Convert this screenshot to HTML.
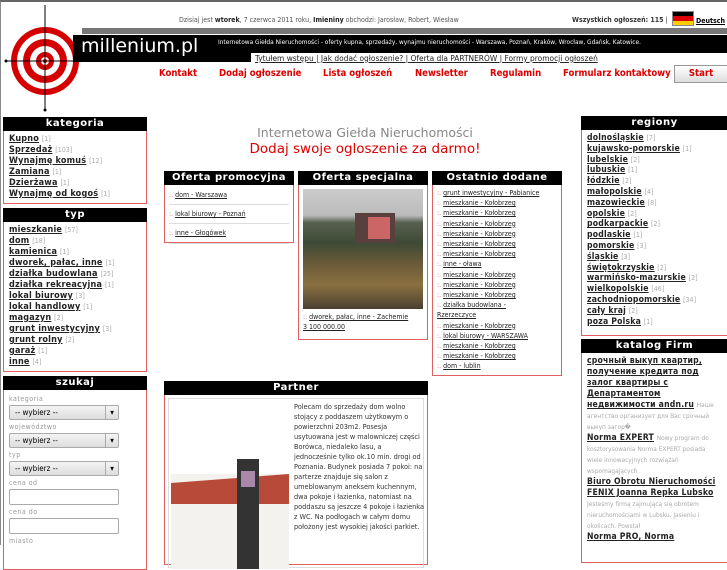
<!DOCTYPE html>
<html><head><meta charset="utf-8"><style>
*{margin:0;padding:0;box-sizing:border-box}
body{width:727px;height:545px;overflow:hidden;background:#fff;font-family:"DejaVu Sans Condensed","DejaVu Sans","Liberation Sans",sans-serif;position:relative;border-top:2px solid #666;border-left:1px solid #888}
.a{position:absolute}
.hd{background:#000;color:#fff;font-weight:bold;font-size:10px;text-align:center;height:14px;line-height:14px;letter-spacing:.5px;font-family:"DejaVu Sans",sans-serif}
.bx{border:1px solid #e06060;border-top:none;background:#fff}
.lst{font-size:9px;line-height:11px;padding:3px 5px;font-weight:bold}
.lst a{color:#222;text-decoration:underline;letter-spacing:.2px}
.lst span{color:#aaa;font-weight:normal;font-size:7px}
.sm{font-size:7px;line-height:10.2px;padding:3px 4px;white-space:nowrap}
.sm a{color:#222;text-decoration:underline}
.sm b{color:#e66;font-weight:normal}
.nav a{color:#d00;font-weight:bold;font-size:9.5px;text-decoration:none;position:absolute;top:0}
.sel{width:110px;height:15px;border:1px solid #aaa;border-radius:2px;background:linear-gradient(#f4f4f4,#ddd);font-size:8px;line-height:13px;padding-left:5px;position:relative}
.sel:after{content:"▾";position:absolute;right:0;top:0;width:12px;border-left:1px solid #aaa;text-align:center;font-size:8px}
.inp{width:110px;height:16px;border:1px solid #aaa;border-radius:2px;background:#fff}
.lb{font-size:7px;color:#999;letter-spacing:.5px;margin:3px 0 2px}
</style></head><body>
<svg class="a" style="left:0;top:0" width="90" height="115">
<circle cx="44" cy="59" r="34" fill="#d40000"/>
<circle cx="44" cy="59" r="28" fill="#fff"/>
<circle cx="44" cy="59" r="22" fill="#d40000"/>
<circle cx="44" cy="59" r="15" fill="#fff"/>
<circle cx="44" cy="59" r="9" fill="#d40000"/>
<circle cx="44" cy="59" r="4" fill="#fff"/>
<circle cx="44" cy="59" r="2" fill="#d40000"/>
<line x1="5" y1="59" x2="72" y2="59" stroke="#000"/>
<line x1="44" y1="3" x2="44" y2="108" stroke="#000"/>
<circle cx="5" cy="59" r="1.5"/><circle cx="44" cy="108" r="1.5"/>
</svg>
<div class="a" style="left:81px;top:26px;width:646px;height:6px;background:#777"></div>
<div class="a" style="left:72px;top:33px;width:655px;height:27px;background:#000"></div>
<div class="a" style="left:250px;top:51px;width:477px;height:10px;background:#fff"></div>
<div class="a" style="left:80px;top:33px;color:#fff;font-size:19px;font-family:'DejaVu Sans',sans-serif">millenium.pl</div>
<div class="a" style="left:178px;top:14px;font-size:7px;color:#555;white-space:nowrap">Dzisiaj jest <b style="color:#222">wtorek</b>, 7 czerwca 2011 roku, <b style="color:#222">Imieniny</b> obchodzi: Jarosław, Robert, Wiesław</div>
<div class="a" style="left:571px;top:14px;font-size:7px;color:#333;white-space:nowrap"><b>Wszystkich ogłoszeń: 115</b> |</div>
<div class="a" style="left:671px;top:9px;width:22px;height:15px;border:1px solid #888"><div style="height:33%;background:#000"></div><div style="height:34%;background:#d00"></div><div style="height:33%;background:#fc0"></div></div>
<div class="a" style="left:695px;top:15px;font-size:7px;font-weight:bold;text-decoration:underline">Deutsch</div>
<div class="a" style="left:217px;top:36px;font-size:6.5px;color:#fff;white-space:nowrap">Internetowa Giełda Nieruchomości - oferty kupna, sprzedaży, wynajmu nieruchomości - Warszawa, Poznań, Kraków, Wrocław, Gdańsk, Katowice.</div>
<div class="a" style="left:254px;top:51px;font-size:8.3px;color:#222;white-space:nowrap;text-decoration:underline">Tytułem wstępu | Jak dodać ogłoszenie? | Oferta dla PARTNERÓW | Formy promocji ogłoszeń</div>
<div class="a nav" style="left:0;top:66px;width:727px">
<a style="left:158px">Kontakt</a><a style="left:218px">Dodaj ogłoszenie</a><a style="left:322px">Lista ogłoszeń</a><a style="left:414px">Newsletter</a><a style="left:489px">Regulamin</a><a style="left:562px">Formularz kontaktowy</a></div>
<div class="a" style="left:673px;top:63px;width:54px;height:18px;border:1px solid #999;background:linear-gradient(#fff,#ddd);color:#d00;font-weight:bold;font-size:9.5px;text-align:center;line-height:16px">Start</div>

<div class="a" style="left:2px;top:115px;width:144px"><div class="hd">kategoria</div><div class="bx lst" style="height:73px">
<a>Kupno</a> <span>[1]</span><br><a>Sprzedaż</a> <span>[103]</span><br><a>Wynajmę komuś</a> <span>[12]</span><br><a>Zamiana</a> <span>[1]</span><br><a>Dzierżawa</a> <span>[1]</span><br><a>Wynajmę od kogoś</a> <span>[1]</span></div></div>
<div class="a" style="left:2px;top:206px;width:144px"><div class="hd">typ</div><div class="bx lst" style="height:150px">
<a>mieszkanie</a> <span>[57]</span><br><a>dom</a> <span>[18]</span><br><a>kamienica</a> <span>[1]</span><br><a>dworek, pałac, inne</a> <span>[1]</span><br><a>działka budowlana</a> <span>[25]</span><br><a>działka rekreacyjna</a> <span>[1]</span><br><a>lokal biurowy</a> <span>[3]</span><br><a>lokal handlowy</a> <span>[1]</span><br><a>magazyn</a> <span>[2]</span><br><a>grunt inwestycyjny</a> <span>[3]</span><br><a>grunt rolny</a> <span>[2]</span><br><a>garaż</a> <span>[1]</span><br><a>inne</a> <span>[4]</span></div></div>
<div class="a" style="left:2px;top:374px;width:144px"><div class="hd">szukaj</div><div class="bx" style="height:180px;padding:2px 5px">
<div class="lb">kategoria</div><div class="sel">-- wybierz --</div>
<div class="lb">województwo</div><div class="sel">-- wybierz --</div>
<div class="lb">typ</div><div class="sel">-- wybierz --</div>
<div class="lb">cena od</div><div class="inp"></div>
<div class="lb">cena do</div><div class="inp"></div>
<div class="lb">miasto</div></div></div>

<div class="a" style="left:150px;top:123px;width:428px;text-align:center;color:#888;font-size:12.5px;font-family:'DejaVu Sans',sans-serif">Internetowa Giełda Nieruchomości</div>
<div class="a" style="left:150px;top:139px;width:428px;text-align:center;color:#d00;font-size:13.5px;font-family:'DejaVu Sans',sans-serif">Dodaj swoje ogloszenie za darmo!</div>

<div class="a" style="left:163px;top:169px;width:130px"><div class="hd">Oferta promocyjna</div><div class="bx sm" style="height:58px">
<div style="border-bottom:1px solid #ddd;padding:2px 0 4px"><b>:.</b> <a>dom - Warszawa</a></div>
<div style="border-bottom:1px solid #ddd;padding:4px 0"><b>:.</b> <a>lokal biurowy - Poznań</a></div>
<div style="border-bottom:1px solid #ddd;padding:4px 0"><b>:.</b> <a>inne - Głogówek</a></div></div></div>
<div class="a" style="left:297px;top:169px;width:130px"><div class="hd">Oferta specjalna</div><div class="bx sm" style="height:155px">
<div style="height:120px;margin:1px 0 3px;background:linear-gradient(#ccc 0,#bbb 22%,#576050 28%,#3e4a35 45%,#6a5a3a 62%,#8a7040 80%,#4a4030 100%);position:relative"><div style="position:absolute;left:52px;top:24px;width:40px;height:30px;background:#5a3f3f"></div><div style="position:absolute;left:65px;top:28px;width:22px;height:22px;background:#c66"></div></div>
<b>:.</b> <a>dworek, pałac, inne - Zachemie</a><br><a>3 100 000.00</a></div></div>
<div class="a" style="left:431px;top:169px;width:130px"><div class="hd">Ostatnio dodane</div><div class="bx sm" style="height:191px">
<b>:.</b> <a>grunt inwestycyjny - Pabianice</a><br><b>:.</b> <a>mieszkanie - Kołobrzeg</a><br><b>:.</b> <a>mieszkanie - Kołobrzeg</a><br><b>:.</b> <a>mieszkanie - Kołobrzeg</a><br><b>:.</b> <a>mieszkanie - Kołobrzeg</a><br><b>:.</b> <a>mieszkanie - Kołobrzeg</a><br><b>:.</b> <a>mieszkanie - Kołobrzeg</a><br><b>:.</b> <a>inne - oława</a><br><b>:.</b> <a>mieszkanie - Kołobrzeg</a><br><b>:.</b> <a>mieszkanie - Kołobrzeg</a><br><b>:.</b> <a>mieszkanie - Kołobrzeg</a><br><b>:.</b> <a>działka budowlana -<br>Rzerzeczyce</a><br><b>:.</b> <a>mieszkanie - Kołobrzeg</a><br><b>:.</b> <a>lokal biurowy - WARSZAWA</a><br><b>:.</b> <a>mieszkanie - Kołobrzeg</a><br><b>:.</b> <a>mieszkanie - Kołobrzeg</a><br><b>:.</b> <a>dom - lublin</a></div></div>

<div class="a" style="left:163px;top:379px;width:264px"><div class="hd">Partner</div><div class="bx" style="height:170px;padding:3px">
<div style="border:1px solid #ddd;height:170px;position:relative">
<div style="position:absolute;left:2px;top:75px;width:118px;height:95px;background:#f4f2ee"></div>
<div style="position:absolute;left:2px;top:75px;width:118px;height:30px;background:#b84a3a;clip-path:polygon(0 100%,0 30%,100% 0,100% 100%)"></div>
<div style="position:absolute;left:68px;top:60px;width:22px;height:110px;background:#333"></div>
<div style="position:absolute;left:72px;top:72px;width:14px;height:16px;background:#a8a"></div>
<div style="position:absolute;left:125px;top:3px;width:132px;font-size:7.3px;line-height:10px;color:#333">Polecam do sprzedaży dom wolno stojący z poddaszem użytkowym o powierzchni 203m2. Posesja usytuowana jest w malowniczej części Borówca, niedaleko lasu, a jednocześnie tylko ok.10 min. drogi od Poznania. Budynek posiada 7 pokoi: na parterze znajduje się salon z umeblowanym aneksem kuchennym, dwa pokoje i łazienka, natomiast na poddaszu są jeszcze 4 pokoje i łazienka z WC. Na podłogach w całym domu położony jest wysokiej jakości parkiet.</div>
</div></div></div>

<div class="a" style="left:580px;top:114px;width:147px"><div class="hd">regiony</div><div class="bx lst" style="height:206px;font-size:8.6px;line-height:10.8px">
<a>dolnośląskie</a> <span>[7]</span><br><a>kujawsko-pomorskie</a> <span>[1]</span><br><a>lubelskie</a> <span>[2]</span><br><a>lubuskie</a> <span>[1]</span><br><a>łódzkie</a> <span>[2]</span><br><a>małopolskie</a> <span>[4]</span><br><a>mazowieckie</a> <span>[8]</span><br><a>opolskie</a> <span>[2]</span><br><a>podkarpackie</a> <span>[2]</span><br><a>podlaskie</a> <span>[1]</span><br><a>pomorskie</a> <span>[3]</span><br><a>śląskie</a> <span>[3]</span><br><a>świętokrzyskie</a> <span>[2]</span><br><a>warmińsko-mazurskie</a> <span>[2]</span><br><a>wielkopolskie</a> <span>[46]</span><br><a>zachodniopomorskie</a> <span>[34]</span><br><a>cały kraj</a> <span>[2]</span><br><a>poza Polska</a> <span>[1]</span></div></div>
<div class="a" style="left:580px;top:337px;width:147px"><div class="hd">katalog Firm</div><div class="bx lst" style="height:210px;font-size:8.6px;line-height:11px">
<a>срочный выкуп квартир, получение кредита под залог квартиры с Департаментом недвижимости andn.ru</a> <span style="font-size:6.5px">Наше агентство организует для Вас срочный выкуп загор�</span><br>
<a>Norma EXPERT</a> <span style="font-size:6.5px">Nowy program do kosztorysowania Norma EXPERT posiada wiele innowacyjnych rozwiązań wspomagających</span><br>
<a>Biuro Obrotu Nieruchomości FENIX Joanna Repka Lubsko</a> <span style="font-size:6.5px">Jesteśmy firmą zajmującą się obrotem nieruchomościami w Lubsku, Jasieniu i okolicach. Powstał</span><br>
<a>Norma PRO, Norma</a></div></div>
</body></html>
